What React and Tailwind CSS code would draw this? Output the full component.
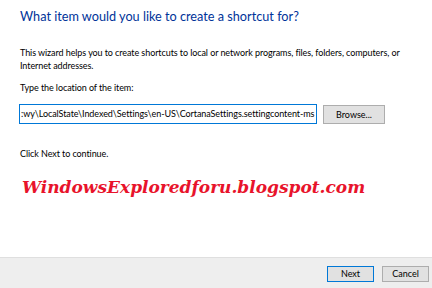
import React from "react";

export default function App() {
  const ui = { fontFamily: 'Lato, "Open Sans", sans-serif' };
  return (
    <div className="w-[432px] h-[288px] bg-white flex flex-col overflow-hidden" style={ui}>
      <div className="pl-[20px] pt-[8px] h-[24px] text-[12.7px] leading-[16px] text-[#003399] whitespace-nowrap">
        What item would you like to create a shortcut for?
      </div>
      <div className="pl-[20px] mt-[22px] text-[9px] tracking-[-0.08px] leading-[13px] text-black">
        <div className="whitespace-nowrap">This wizard helps you to create shortcuts to local or network programs, files, folders, computers, or</div>
        <div className="whitespace-nowrap">Internet addresses.</div>
      </div>
      <div className="pl-[20px] mt-[9px] text-[9px] tracking-[-0.08px] leading-[13px] text-black whitespace-nowrap">
        Type the location of the item:
      </div>
      <div className="flex items-start mt-[10px] pl-[19px]">
        <div className="w-[298px] h-[20px] border border-[#0078d7] bg-white flex items-center overflow-hidden pl-[1px] text-[9px] tracking-[-0.08px] text-black whitespace-nowrap">
          :wy\LocalState\Indexed\Settings\en-US\CortanaSettings.settingcontent-ms
        </div>
        <div className="ml-[6px] mt-[1px] w-[62px] h-[19px] border border-[#adadad] bg-[#e1e1e1] flex items-center justify-center text-[9px] text-black">
          Browse...
        </div>
      </div>
      <div className="pl-[20px] mt-[23px] text-[9px] tracking-[-0.08px] leading-[13px] text-black whitespace-nowrap">
        Click Next to continue.
      </div>
      <div
        className="pl-[22px] mt-[15px] text-[17px] leading-[24px] font-bold italic text-[#e8132b] whitespace-nowrap"
        style={{ fontFamily: '"DejaVu Serif", "Liberation Serif", serif' }}
      >
        WindowsExploredforu.blogspot.com
      </div>
      <div className="mt-auto h-[31px] border-t border-[#dfdfdf] bg-[#eeeeee] flex justify-end items-start gap-[8px] pr-[3px] pt-[8px]">
        <div className="w-[47px] h-[16px] border border-[#0078d7] bg-[#e1e1e1] flex items-center justify-center text-[9px] text-black">
          Next
        </div>
        <div className="w-[47px] h-[16px] border border-[#adadad] bg-[#e1e1e1] flex items-center justify-center text-[9px] text-black">
          Cancel
        </div>
      </div>
    </div>
  );
}
